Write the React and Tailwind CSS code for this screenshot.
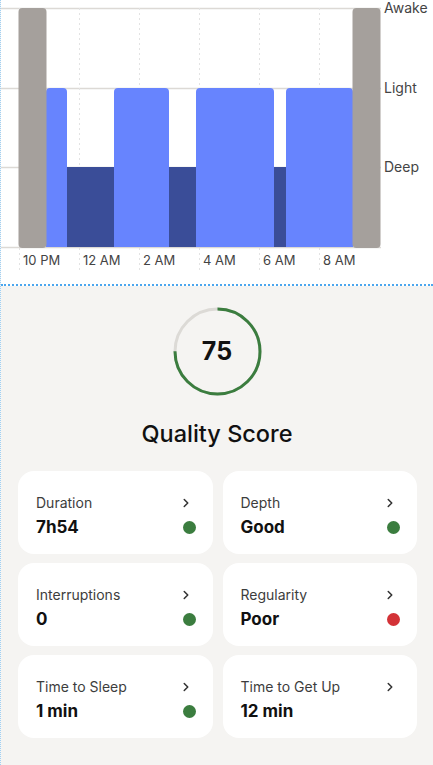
import { ChevronRight } from "lucide-react";

const segments = [
    { x1: 45, x2: 66, type: "light" },
    { x1: 66, x2: 113, type: "deep" },
    { x1: 113, x2: 168, type: "light" },
    { x1: 168, x2: 195, type: "deep" },
    { x1: 195, x2: 273, type: "light" },
    { x1: 273, x2: 285, type: "deep" },
    { x1: 285, x2: 352, type: "light" },
];

const hours = [
    { x: 18, label: "10 PM" },
    { x: 78, label: "12 AM" },
    { x: 138, label: "2 AM" },
    { x: 198, label: "4 AM" },
    { x: 258, label: "6 AM" },
    { x: 318, label: "8 AM" },
];

const stats = [
    { label: "Duration", value: "7h54", dot: "bg-[#3b7d3f]" },
    { label: "Depth", value: "Good", dot: "bg-[#3b7d3f]" },
    { label: "Interruptions", value: "0", dot: "bg-[#3b7d3f]" },
    { label: "Regularity", value: "Poor", dot: "bg-[#d33237]" },
    { label: "Time to Sleep", value: "1 min", dot: "bg-[#3b7d3f]" },
    { label: "Time to Get Up", value: "12 min", dot: null },
];

// top rounded bar path
function barPath(x1, x2, top, bottom, r) {
    return `M${x1},${bottom} L${x1},${top + r} Q${x1},${top} ${x1 + r},${top} L${x2 - r},${top} Q${x2},${top} ${x2},${top + r} L${x2},${bottom} Z`;
}

function SleepChart() {
    const LIGHT = 88;
    const DEEP = 167;
    const BOTTOM = 247;

    return (
        <svg width="433" height="284" className="block" style={{ fontFamily: "Inter, 'Liberation Sans', sans-serif" }}>
            {/* grid */}
            {[8, LIGHT, DEEP, BOTTOM].map((y) => (
                <line key={y} x1="0" x2="380" y1={y + 0.5} y2={y + 0.5} stroke="#dcd9d5" strokeWidth="1.5" />
            ))}
            {hours.map((h) => (
                <line key={h.x} x1={h.x + 0.5} x2={h.x + 0.5} y1="8" y2="270" stroke="#e3e3e3" strokeWidth="1" strokeDasharray="2 3" />
            ))}

            {/* stages */}
            {segments.map((s) =>
                s.type === "light" ? (
                    <path key={s.x1} d={barPath(s.x1, s.x2, LIGHT, BOTTOM, 4)} fill="#6784fe" />
                ) : (
                    <rect key={s.x1} x={s.x1} y={DEEP} width={s.x2 - s.x1} height={BOTTOM - DEEP} fill="#3a4d98" />
                )
            )}

            {/* awake bars */}
            <rect x="17.5" y="8" width="28" height="240" rx="4" fill="#a5a09c" />
            <rect x="351.5" y="8" width="28" height="240" rx="4" fill="#a5a09c" />

            {/* labels */}
            <text x="383" y="13" fontSize="14" fill="#444">Awake</text>
            <text x="383" y="93" fontSize="14" fill="#444">Light</text>
            <text x="383" y="172" fontSize="14" fill="#444">Deep</text>
            {hours.map((h) => (
                <text key={h.label} x={h.x + 4} y="265" fontSize="13" fill="#444">{h.label}</text>
            ))}
        </svg>
    );
}

function ScoreRing({ score }) {
    const r = 42.5;
    const c = 2 * Math.PI * r;

    return (
        <div className="relative h-[89px] w-[89px]">
            <svg width="89" height="89" className="-rotate-90">
                <circle cx="44.5" cy="44.5" r={r} fill="none" stroke="#dcdad6" strokeWidth="3" />
                <circle
                    cx="44.5"
                    cy="44.5"
                    r={r}
                    fill="none"
                    stroke="#3b7d3f"
                    strokeWidth="3"
                    strokeDasharray={`${(c * score) / 100} ${c}`}
                />
            </svg>
            <div className="absolute inset-0 flex items-center justify-center text-[25px] font-bold text-[#111]">
                {score}
            </div>
        </div>
    );
}

export default function App() {
    return (
        <div className="min-h-[765px] border-l border-dotted border-[#9fd0f5] bg-[#f5f4f2] font-['Inter','Liberation_Sans',sans-serif]">

            <div className="border-b-2 border-dotted border-[#4ba6ee] bg-white">
                <SleepChart />
            </div>

            <div className="flex flex-col items-center pt-[21px]">
                <ScoreRing score={75} />
                <h1 className="mt-[23px] text-[23.5px] font-medium leading-[30px] text-[#111]">
                    Quality Score
                </h1>
            </div>

            <div className="mt-[22px] grid grid-cols-2 gap-x-[10px] gap-y-[9px] pl-[17px] pr-[16px]">
                {stats.map((s) => (
                    <div key={s.label} className="h-[83px] rounded-[16px] bg-white pl-[18px] pr-[17px] pt-[23px]">
                        <div className="flex items-center justify-between">
                            <span className="text-[14px] leading-[18px] text-[#3d3d3d]">{s.label}</span>
                            <ChevronRight size={14} strokeWidth={2.6} className="mr-[3px] text-[#333]" />
                        </div>
                        <div className="mt-[4px] flex items-center justify-between">
                            <span className="text-[17px] font-bold leading-[22px] text-[#111]">{s.value}</span>
                            {s.dot && <span className={`h-[13px] w-[13px] rounded-full ${s.dot}`} />}
                        </div>
                    </div>
                ))}
            </div>

        </div>
    );
}
